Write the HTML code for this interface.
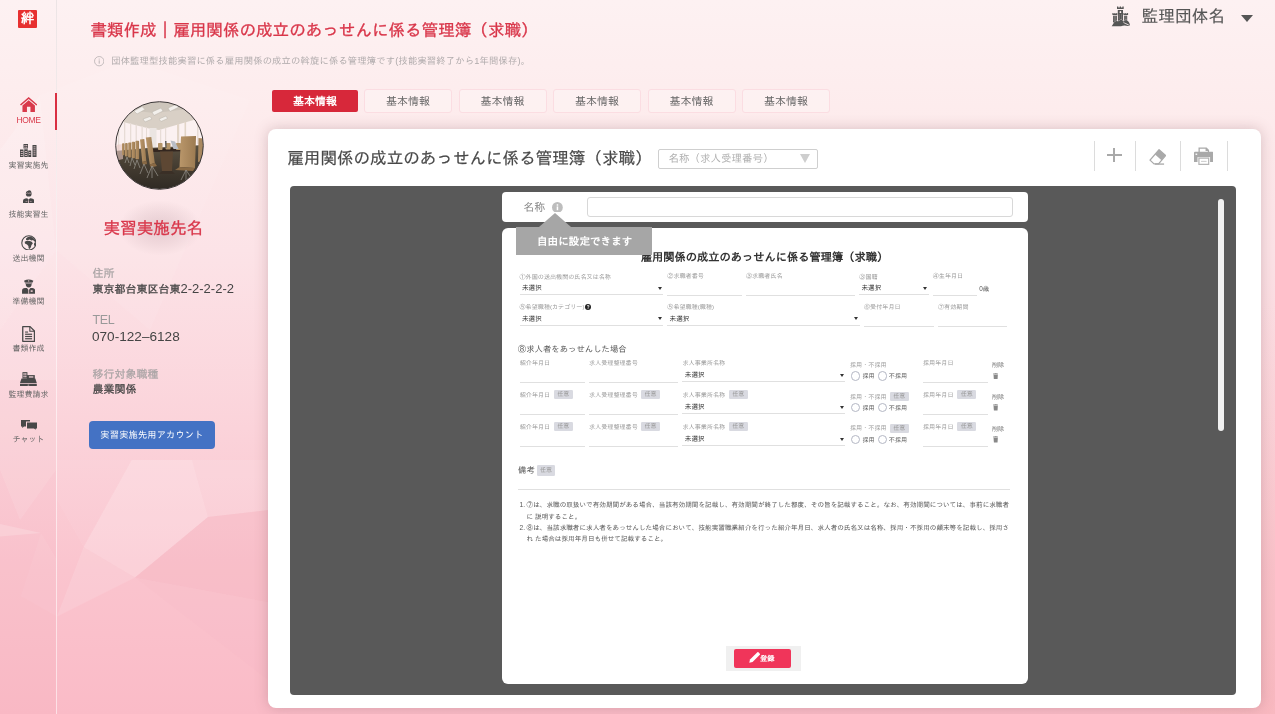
<!DOCTYPE html>
<html lang="ja"><head><meta charset="utf-8"><title>書類作成</title><style>
*{box-sizing:border-box;margin:0;padding:0}
html,body{width:1275px;height:714px;overflow:hidden}
body{position:relative;font-family:"Liberation Sans","IPAGothic",sans-serif;color:#444;background:#fbd9df}
#root{position:absolute;left:0;top:0;width:1275px;height:714px;overflow:hidden;will-change:transform}
.abs{position:absolute}
.t{position:absolute;white-space:nowrap;line-height:1}
#bg{position:absolute;left:0;top:0;width:1275px;height:714px}
.serif{font-family:"Liberation Sans","IPAGothic",sans-serif}
.side-l{position:absolute;left:0;width:57px;text-align:center;font-size:8px;color:#666;line-height:1;white-space:nowrap}
.tab{position:absolute;top:89px;height:24px;width:88px;border:1px solid #fbdde2;background:rgba(255,255,255,.25);border-radius:3px;font-size:11px;line-height:22px;text-align:center;color:#666}
.tab.on{top:90px;height:22px;left:272px;width:86px;background:#d7283a;border:0;color:#fff;font-weight:bold;border-radius:2px}
.lb{position:absolute;font-size:6.1px;line-height:1;color:#999;white-space:nowrap}
.vl{position:absolute;font-size:6.6px;line-height:1;color:#333;white-space:nowrap}
.ul{position:absolute;height:1px;background:#e0e0e0}
.ar{position:absolute;width:0;height:0;border-left:2.1px solid transparent;border-right:2.1px solid transparent;border-top:3.6px solid #333}
.bd{position:absolute;width:18.6px;height:8.7px;background:#d9dae1;border-radius:1.2px;font-size:6px;line-height:8.7px;text-align:center;color:#999}
.rd{position:absolute;width:9.3px;height:9.3px;border:0.7px solid #b4b7c4;border-radius:50%;background:#fff}
</style></head><body><div id="root">
<svg id="bg" viewBox="0 0 1275 714" preserveAspectRatio="none">
<defs>
<linearGradient id="g0" x1="0" y1="0" x2="0" y2="1">
<stop offset="0" stop-color="#fdf1f2"/><stop offset="0.15" stop-color="#fdeced"/><stop offset="0.35" stop-color="#fce3e7"/><stop offset="0.6" stop-color="#fbd3da"/><stop offset="0.8" stop-color="#fac4ce"/><stop offset="1" stop-color="#fabbc7"/>
</linearGradient>
<linearGradient id="g1" x1="0" y1="0" x2="0" y2="1"><stop offset="0" stop-color="#f5b0a8" stop-opacity="0"/><stop offset="1" stop-color="#f5b0a8" stop-opacity=".22"/></linearGradient>
</defs>
<rect width="1275" height="714" fill="url(#g0)"/>
<polygon points="0,150 40,95 56,250 0,330" fill="#fff" opacity=".16"/>
<polygon points="56,250 40,95 130,60 250,100 150,330" fill="#fff" opacity=".07"/>
<polygon points="0,330 56,250 56,470 20,520 0,470" fill="#fff" opacity=".10"/>
<polygon points="57,460 131.7,460 83.6,547 57,500" fill="#fff" opacity=".05"/>
<polygon points="131.7,460 192,460 208,517 135,577.4 83.6,547" fill="#fff" opacity=".22"/>
<polygon points="192,460 268,460 268,510 208,517" fill="#fff" opacity=".12"/>
<polygon points="208,517 268,510 268,602 135,577.4" fill="#f3a9b6" opacity=".22"/>
<polygon points="83.6,547 135,577.4 57,616.6" fill="#fff" opacity=".12"/>
<polygon points="135,577.4 268,602 268,680" fill="#f3a9b6" opacity=".06"/>
<polygon points="0,524 41,533 0,536.5" fill="#fff" opacity=".2"/>
<polygon points="41,533 21,596 57,616.6 57,560" fill="#fff" opacity=".06"/>
<rect x="0" y="380" width="56" height="334" fill="#f08aa0" opacity=".05"/>
<rect x="1180" y="300" width="95" height="414" fill="url(#g1)"/>
</svg>
<nav aria-label="メニュー">
<div class="abs" style="left:56px;top:0;width:1px;height:714px;background:rgba(255,255,255,.55)"></div>
<div class="abs" style="left:56px;top:0;width:1px;height:330px;background:linear-gradient(#ece4e5,rgba(236,228,229,0))"></div>
<div class="abs serif" style="left:18.2px;top:9.8px;width:18.8px;height:18.6px;background:#e73030;color:#fff;font-weight:900;font-size:13.5px;line-height:18px;text-align:center;border-radius:1px">絆</div>
<div class="abs" style="left:55px;top:93px;width:2px;height:37px;background:#d92f42"></div>
<svg class="abs" style="left:20px;top:97px" width="17.4" height="15" viewBox="0 0 24 20.7"><path fill="#d93a4b" d="M12 0 L24 10.3 L22.6 11.9 L12 2.9 L1.4 11.9 L0 10.3 Z"/><path fill="#d93a4b" d="M12 4.6 L20.6 11.9 V20.7 H14.4 V13.6 H9.6 V20.7 H3.4 V11.9 Z"/></svg>
<div class="side-l" style="top:115.9px;font-size:8.5px;color:#d93a4b;letter-spacing:-.4px;padding-left:0px">HOME</div>
<svg class="abs" style="left:20px;top:144px" width="17" height="13" viewBox="0 0 34 26" fill="#484848">
<rect x="7" y="0" width="9" height="9"/><rect x="0" y="11" width="7" height="15"/><rect x="8.5" y="10.5" width="7" height="15.5"/><rect x="16.5" y="13" width="6" height="13"/><rect x="25" y="2" width="8" height="24"/>
<g fill="#f6d5db"><rect x="9" y="2" width="2" height="2"/><rect x="12.5" y="2" width="2" height="2"/><rect x="9" y="5.5" width="2" height="2"/><rect x="12.5" y="5.5" width="2" height="2"/>
<rect x="1.5" y="14" width="4" height="1.5"/><rect x="1.5" y="18" width="4" height="1.5"/><rect x="1.5" y="22" width="4" height="1.5"/>
<rect x="10" y="14" width="4" height="1.5"/><rect x="10" y="18" width="4" height="1.5"/><rect x="10" y="22" width="4" height="1.5"/>
<rect x="18" y="16" width="3" height="1.5"/><rect x="18" y="20" width="3" height="1.5"/>
<rect x="27" y="5" width="4" height="1.5"/><rect x="27" y="9" width="4" height="1.5"/><rect x="27" y="13" width="4" height="1.5"/><rect x="27" y="17" width="4" height="1.5"/><rect x="27" y="21" width="4" height="1.5"/></g></svg>
<div class="side-l" style="top:161.9px">実習実施先</div>
<svg class="abs" style="left:23px;top:189.700px" width="11.200" height="13.400" viewBox="0 0 22 26.300" fill="#484848">
<circle cx="11.300" cy="7.300" r="5.700"/><path d="M7.500 3 L12 0.300 L16.300 2 L15 4.500 Z"/>
<path d="M0 26.300 V21 Q0 17.300 4.500 16.800 L8.200 16.300 L11 19.300 L13.800 16.300 L17.500 16.800 Q22 17.300 22 21 V26.300 Z"/>
<path d="M6.300 7.300 Q8.500 4.600 11.300 6.600 Q14 4.600 16.300 7.300" stroke="#f6d5db" stroke-width="1.100" fill="none"/><path d="M10.300 20 h1.500 v6.300 h-1.500z" fill="#f6d5db"/><path d="M5 22.500 h3.500 M13.500 22.500 h3.500" stroke="#f6d5db" stroke-width=".9"/></svg>
<div class="side-l" style="top:210.9px">技能実習生</div>
<svg class="abs" style="left:20.500px;top:234.600px" width="15.800" height="15.800" viewBox="0 0 32 32">
<circle cx="16" cy="16" r="14.400" fill="none" stroke="#484848" stroke-width="2.200"/>
<g fill="#484848"><path d="M10.500 6.500 Q14 3 19 3.200 Q25 4.500 28.500 10 L29.800 14 L26.500 12.800 L24.500 10.200 L21 11 L17.500 9.300 L13.500 10.500 L10 9.500 Z"/>
<path d="M7.500 13.500 L12 11.800 L18 12.200 L22.300 14 L24 17.200 L21.200 20.200 L20.200 24.200 L17.600 28.200 L15.400 27 L15 22.300 L12.200 19.300 L8 17.300 Z"/>
<path d="M26.800 15.500 L30 14.500 L30.200 20 L28 23.500 L26.300 19.500 Z"/></g></svg>
<div class="side-l" style="top:254.9px">送出機関</div>
<svg class="abs" style="left:22px;top:279px" width="13.4" height="14.8" viewBox="0 0 27 30" fill="#484848">
<path d="M4 3.5 Q13.5 -1.5 23 3.5 L21.5 7 H5.5 Z"/><rect x="6.5" y="7.5" width="14" height="1.8"/>
<path d="M7.5 10 H19.5 Q19.5 17 13.5 17 Q7.5 17 7.5 10Z"/>
<path d="M0 30 V24 Q0 19 6 18.5 L10 18 L13.5 23 L17 18 L21 18.5 Q27 19 27 24 V30 Z"/>
<path d="M12.7 22 h1.6 v8 h-1.6z" fill="#f6d5db"/><rect x="17.5" y="23" width="4" height="3" fill="#f6d5db"/><circle cx="13.5" cy="4" r="1.3" fill="#f6d5db"/></svg>
<div class="side-l" style="top:297.9px">準備機関</div>
<svg class="abs" style="left:22px;top:325.900px" width="13.200" height="16" viewBox="0 0 26 32">
<path d="M1.3 1.3 H16 L24.7 10 V30.7 H1.3 Z" fill="none" stroke="#484848" stroke-width="2.6" stroke-linejoin="round"/>
<path d="M15.5 1.5 V10.5 H24.5" fill="none" stroke="#484848" stroke-width="2.2"/>
<g fill="#484848"><rect x="6" y="11" width="6" height="2.2"/><rect x="6" y="15.3" width="14" height="2.4"/><rect x="6" y="19.8" width="14" height="2.4"/><rect x="6" y="24.3" width="14" height="2.4"/></g></svg>
<div class="side-l" style="top:345.1px">書類作成</div>
<svg class="abs" style="left:20.3px;top:371.5px" width="16.8" height="14.6" viewBox="0 0 34 29" fill="#484848">
<rect x="5" y="0" width="10" height="13"/><rect x="14" y="6" width="16" height="9"/>
<path d="M3 13 H31 L34 22 H0 Z"/><rect x="0" y="23.5" width="34" height="5.5"/>
<g fill="#f6d5db"><rect x="7" y="2" width="2.4" height="3.5"/><rect x="10.6" y="2" width="2.4" height="3.5"/><rect x="7" y="7" width="2.4" height="3.5"/><rect x="10.6" y="7" width="2.4" height="3.5"/><rect x="18" y="8.5" width="9" height="2.5"/><rect x="15.5" y="25.5" width="3" height="1.4"/></g></svg>
<div class="side-l" style="top:390.9px">監理費請求</div>
<svg class="abs" style="left:20.7px;top:419.8px" width="16" height="9.8" viewBox="0 0 32 19.6" fill="#484848">
<path d="M0 0 H18 V3 H10 V13 H6 L2.5 16 V13 H0 Z"/><path d="M12 5 H32 V17 H29.5 V19.6 L26 17 H12 Z"/></svg>
<div class="side-l" style="top:435.9px">チャット</div>
</nav>
<header>
<div class="t serif" style="left:90.4px;top:23.2px;font-size:16.57px;font-weight:400;-webkit-text-stroke:.3px #d9364a;color:#d9364a">書類作成｜雇用関係の成立のあっせんに係る管理簿（求職）</div>
<svg class="abs" style="left:93.5px;top:56.2px" width="10.4" height="10.4" viewBox="0 0 20 20"><circle cx="10" cy="10" r="9" fill="none" stroke="#b9b3b4" stroke-width="1.6"/><rect x="9.1" y="8.3" width="1.8" height="6.5" fill="#b9b3b4"/><rect x="9.1" y="5" width="1.8" height="1.9" fill="#b9b3b4"/></svg>
<div class="t" style="left:111.2px;top:57.4px;font-size:9.3px;color:#b0abac;letter-spacing:.17px">団体監理型技能実習に係る雇用関係の成立の斡旋に係る管理簿です(技能実習終了から1年間保存)。</div>
<svg class="abs" style="left:1111px;top:6px" width="20" height="21" viewBox="0 0 20 21" fill="#555">
<path d="M6 3 V0.5 H7.3 V1.5 H8.7 V0.5 H10 V1.5 H11.4 V0.5 H12.7 V3 Z"/>
<path d="M6.800 4 H12 V15 H6.800 Z"/>
<path d="M1.400 9 V6.900 H2.500 V7.700 H3.400 V6.900 H4.400 V7.700 H5.300 V6.900 H6.300 V9 Z"/>
<path d="M2 9.700 H6.100 V16.500 H2 Z"/>
<path d="M12.400 9 V6.900 H13.400 V7.700 H14.300 V6.900 H15.300 V7.700 H16.100 V6.900 H17.100 V9 Z"/>
<path d="M12.800 9.700 H16.200 V15 H12.800 Z"/>
<path d="M0.700 20.200 L3.200 16.300 Q5 14.600 7.200 15.200 L10.300 13.600 L12.600 15.600 L15 13.900 Q18.200 14.800 19 19.200 L16.800 19.900 Q13 18.800 10 20.200 Z" stroke="#fdeff0" stroke-width=".7" paint-order="stroke"/>
<g fill="#fdeff0"><path d="M8.600 7 V5.600 Q9.400 4.500 10.200 5.600 V7 Z"/><rect x="6.100" y="9.700" width=".7" height="5.500"/><rect x="12" y="9.700" width=".8" height="4.500"/>
<path d="M12.600 16.200 L17.800 18.600 L17.300 19.200 L12.200 16.800 Z"/></g>
<g stroke="#fdeff0" stroke-width=".35" opacity=".6"><path d="M3 10 V15 M4 10 V15 M5 10 V15 M13.800 10 V14 M15.100 10 V14 M8.200 8 V13.500 M10.600 8 V13.500"/></g>
</svg>
<div class="t" style="left:1141.6px;top:9.3px;font-size:16.7px;-webkit-text-stroke:.15px #555;color:#555">監理団体名</div>
<div class="abs" style="left:1240.9px;top:14.9px;width:0;height:0;border-left:6.3px solid transparent;border-right:6.3px solid transparent;border-top:7.9px solid #555"></div>
</header>
<aside>
<div class="abs" style="left:118px;top:200px;width:84px;height:56px;background:radial-gradient(ellipse at center,rgba(110,70,80,.17) 0%,rgba(110,70,80,.08) 40%,rgba(110,70,80,0) 70%)"></div>
<svg class="abs" style="left:114.5px;top:100.5px" width="89" height="89" viewBox="0 0 89 89">
<defs><clipPath id="cp"><circle cx="44.5" cy="44.5" r="43.6"/></clipPath>
<linearGradient id="fl" x1="0" y1="0" x2="0" y2="1"><stop offset="0" stop-color="#5b5242"/><stop offset=".5" stop-color="#433b30"/><stop offset="1" stop-color="#2e2923"/></linearGradient>
<linearGradient id="ch" x1="0" y1="0" x2="1" y2="0"><stop offset="0" stop-color="#b9966a"/><stop offset="1" stop-color="#9c7b52"/></linearGradient></defs>
<g clip-path="url(#cp)">
<rect width="89" height="89" fill="#fbf1f1"/>
<polygon points="0,0 89,0 89,16 44,29 36,28 0,19" fill="#d9d0c6"/>
<polygon points="0,0 89,0 89,6 40,12 0,8" fill="#cdc5bb"/>
<g fill="#f3f0ec" stroke="#b9b2a8" stroke-width=".5"><polygon points="19,10 27,5.5 30,8.5 22,13"/><polygon points="37,11 46,7 48,10 39,14.5"/><polygon points="53,7 62,3 64,6 55,10.5"/><polygon points="28,18 35,15.5 37,18 30,21"/><polygon points="44,18 51,15 52.5,17.5 46,20.5"/></g>
<rect x="34.5" y="27" width="7" height="24" fill="#ebe5e2"/>
<g fill="#e7dcd6"><rect x="3" y="20" width="1.2" height="30"/><rect x="9" y="21" width="1.3" height="28"/><rect x="15" y="22" width="1.3" height="27"/><rect x="20.6" y="23.5" width="1.3" height="25"/><rect x="26.5" y="25" width="1.3" height="24"/><rect x="31" y="26" width="1" height="22"/>
<rect x="45" y="28" width="1.2" height="20"/><rect x="50" y="26.5" width="1.2" height="21"/><rect x="62" y="23" width="2.2" height="23" fill="#e2d5c8"/><rect x="69.5" y="21" width="1.6" height="24" fill="#e2d5c8"/><rect x="82" y="17" width="1.5" height="26"/></g>
<polygon points="0,50 33,47 89,44 89,89 0,89" fill="url(#fl)"/>
<polygon points="0,44 8,43 8,58 0,60" fill="#e9c9c4" opacity=".6"/>
<polygon points="36,47.800 68,46.800 67,50.300 38,51" fill="#33261f"/>
<polygon points="45,50.5 58,50.5 57,70 47,70" fill="#5d4733"/>
<polygon points="47,70 57,70 60,73 44,73" fill="#3a2f26"/>
<g fill="#b39468"><rect x="43" y="42" width="4.5" height="7" rx=".8"/><rect x="50.5" y="42" width="5" height="6.5" rx=".8"/><rect x="61" y="42" width="5" height="7" rx=".8"/></g>
<g fill="url(#ch)"><rect x="7" y="42.300" width="2.500" height="12" rx=".8"/><rect x="10" y="42" width="2.700" height="13.500" rx=".8"/><rect x="13.200" y="41.500" width="3" height="15" rx=".8"/><rect x="16.700" y="40.800" width="3.300" height="16.500" rx=".8"/><rect x="20.500" y="39.800" width="3.600" height="18.500" rx=".8"/><polygon points="25,38.500 29.300,38 31.300,60 27.300,61"/><polygon points="30.800,36.500 36.300,36 39.800,62 34.800,63.500"/></g>
<g fill="#8a6a45"><polygon points="27,61 31.500,60 32,63 28,64"/><polygon points="34.5,63.500 40,62 42,65 36,66.5"/></g>
<polygon points="66,35.5 81,35 80,67 64.500,66" fill="url(#ch)"/><polygon points="83.5,37 88,37.5 88,60 83,61" fill="#a98860"/>
<polygon points="64.500,66 80,67 78,70 60,69" fill="#8a6a45"/>
<polygon points="55.5,39.5 60,40.5 63.500,48 58.5,48" fill="#b9bec6"/><polygon points="50,40 51.500,40 51.500,47 50.500,47" fill="#555"/>
<g stroke="#9a968f" stroke-width=".7" fill="none"><path d="M37 65 l-5 12 m5 -12 l6 10 m-6 -10 v12"/><path d="M29 63 l-4 10 m4 -10 l4 9"/><path d="M22 59 l-3 9 m3 -9 l3 8"/><path d="M17 57 l-2 8 m2 -8 l3 7"/><path d="M12 56 l-2 6 m2 -6 l2 6"/><path d="M71 69 l-5 10 m5 -10 l6 9 m-6 -9 v11"/></g>
</g>
<circle cx="44.500" cy="44.500" r="43.800" fill="none" stroke="#3a3636" stroke-width="1"/></svg>
<div class="t serif" style="left:103.5px;top:220.6px;font-size:16.6px;font-weight:400;-webkit-text-stroke:.3px #d9364a;color:#d9364a">実習実施先名</div>
<div class="t serif" style="left:92.5px;top:267.8px;font-size:11px;font-weight:400;-webkit-text-stroke:.25px #aaa4a5;color:#aaa4a5">住所</div>
<div class="t serif" style="left:92.5px;top:281.7px;font-size:11px;font-weight:400;color:#444"><span style="-webkit-text-stroke:.28px #444">東京都台東区台東</span><span style="font-size:13px;font-weight:400">2-2-2-2-2</span></div>
<div class="t" style="left:92.5px;top:314.3px;font-size:12.5px;letter-spacing:-.35px;color:#999">TEL</div>
<div class="t" style="left:92px;top:330.4px;font-size:13.6px;color:#444">070-122–6128</div>
<div class="t serif" style="left:92.5px;top:369px;font-size:11px;font-weight:400;-webkit-text-stroke:.25px #aaa4a5;color:#aaa4a5">移行対象職種</div>
<div class="t serif" style="left:92.5px;top:384.2px;font-size:11px;font-weight:400;-webkit-text-stroke:.28px #444;color:#444">農業関係</div>
<div class="abs" style="left:89px;top:421px;width:126px;height:28px;background:#4472c4;border-radius:4px;color:#fff;font-size:9.2px;line-height:29.6px;text-align:center;letter-spacing:.2px">実習実施先用アカウント</div>
</aside>
<main>
<div class="tab on">基本情報</div>
<div class="tab" style="left:364px">基本情報</div>
<div class="tab" style="left:458.5px">基本情報</div>
<div class="tab" style="left:553px">基本情報</div>
<div class="tab" style="left:647.5px">基本情報</div>
<div class="tab" style="left:742px">基本情報</div>
<div class="abs" style="left:268px;top:129px;width:993px;height:579px;background:#fff;border-radius:8px;box-shadow:0 0 14px rgba(130,85,92,.3)"></div>
<div class="t serif" style="left:287.3px;top:150.6px;font-size:16.57px;font-weight:400;-webkit-text-stroke:.2px #484848;color:#484848">雇用関係の成立のあっせんに係る管理簿（求職）</div>
<div class="abs" style="left:658px;top:149px;width:160px;height:20px;border:1px solid #cfcfcf;border-radius:2px;background:#fff"></div>
<div class="t" style="left:668.4px;top:152.9px;font-size:10.5px;color:#b0b0b0">名称（求人受理番号）</div>
<div class="abs" style="left:799.9px;top:154.2px;width:0;height:0;border-left:5.8px solid transparent;border-right:5.8px solid transparent;border-top:9px solid #cecece"></div>
<div class="abs" style="left:1094px;top:141px;width:1px;height:30px;background:#dcdcdc"></div>
<div class="abs" style="left:1135px;top:141px;width:1px;height:30px;background:#dcdcdc"></div>
<div class="abs" style="left:1180px;top:141px;width:1px;height:30px;background:#dcdcdc"></div>
<div class="abs" style="left:1227px;top:141px;width:1px;height:30px;background:#dcdcdc"></div>
<div class="abs" style="left:1107.2px;top:154px;width:14.4px;height:2px;background:#a9a9a9"></div><div class="abs" style="left:1113.4px;top:147.8px;width:2px;height:14.4px;background:#a9a9a9"></div>
<svg class="abs" style="left:1148.7px;top:149px" width="17.6" height="16.2" viewBox="0 0 35 32"><path d="M20 1.5 L33 13 L19 29.5 H10 L2 22 Z" fill="#fff" stroke="#a9a9a9" stroke-width="2.6" stroke-linejoin="round"/><path d="M20 1.5 L33 13 L25 22.5 L12 11 Z" fill="#a9a9a9"/><rect x="12" y="28.6" width="18" height="2.6" fill="#a9a9a9"/></svg>
<svg class="abs" style="left:1193.5px;top:147.2px" width="19.6" height="18.2" viewBox="0 0 39 36" fill="#a9a9a9"><path d="M9 1 H25 L30 6 V13 H9 Z"/><path d="M11.500 3.500 H23 V8 H27.500 V13 H11.500 Z" fill="#fff"/><path d="M2 9.500 H37 Q39 9.500 39 11.500 V30 H0 V11.500 Q0 9.500 2 9.500Z"/><rect x="7" y="20" width="25" height="16" fill="#fff"/><path d="M9.800 22 H29.200 V34.500 H9.800Z" fill="#fff" stroke="#b4b4b4" stroke-width="2.400"/><rect x="14" y="27.500" width="11" height="1.800" fill="#c4c4c4"/><rect x="3" y="13" width="3.400" height="2.600" fill="#fff"/></svg>
<div class="abs" style="left:290px;top:186px;width:946px;height:508.5px;background:#595959;border-radius:4px"></div>
<div class="abs" style="left:1218px;top:198.6px;width:5.8px;height:232.6px;background:#f1f1f1;border-radius:3px"></div>
<div class="abs" style="left:502px;top:192px;width:526px;height:30px;background:#fff;border-radius:4px"></div>
<div class="t" style="left:523.3px;top:201.5px;font-size:11px;color:#888">名称</div>
<svg class="abs" style="left:551.9px;top:201.6px" width="10.8" height="10.8" viewBox="0 0 20 20"><circle cx="10" cy="10" r="10" fill="#bdbdbd"/><rect x="8.7" y="8.2" width="2.8" height="7" fill="#fff"/><rect x="8.7" y="4.2" width="2.8" height="2.6" fill="#fff"/></svg>
<div class="abs" style="left:587px;top:197px;width:426px;height:20px;border:1px solid #d8d8d8;border-radius:3px;background:#fff"></div>
<div class="abs" style="left:502px;top:228px;width:526px;height:456px;background:#fff;border-radius:6px"></div>
<div class="t" style="left:640.7px;top:251.7px;font-size:11.25px;font-weight:700;color:#333">雇用関係の成立のあっせんに係る管理簿（求職）</div>
<div class="abs" style="left:516px;top:227px;width:135.7px;height:28.4px;background:#a6a6a6"></div>
<div class="abs" style="left:539px;top:212.7px;width:0;height:0;border-left:16.7px solid transparent;border-right:16.7px solid transparent;border-bottom:14.4px solid #a6a6a6"></div>
<div class="t" style="left:537px;top:235.6px;font-size:10.6px;font-weight:700;color:#fff">自由に設定できます</div>
<div class="lb" style="left:519.5px;top:273.7px">①外国の送出機関の氏名又は名称</div>
<div class="vl" style="left:522px;top:285.4px">未選択</div>
<div class="ar" style="left:657.7px;top:286.7px"></div>
<div class="ul" style="left:519.7px;top:293.9px;width:143.6px"></div>
<div class="lb" style="left:667.3px;top:273.1px">②求職者番号</div>
<div class="ul" style="left:667.3px;top:294.8px;width:75.0px"></div>
<div class="lb" style="left:746px;top:273.1px">③求職者氏名</div>
<div class="ul" style="left:746px;top:294.8px;width:109.0px"></div>
<div class="lb" style="left:859.3px;top:273.7px">③国籍</div>
<div class="vl" style="left:861.5px;top:285.4px">未選択</div>
<div class="ar" style="left:923.1px;top:286.7px"></div>
<div class="ul" style="left:859.3px;top:293.9px;width:69.4px"></div>
<div class="lb" style="left:932.7px;top:273.1px">④生年月日</div>
<div class="ul" style="left:932.7px;top:294.8px;width:44.6px"></div>
<div class="vl" style="left:979.3px;top:285.6px;font-size:6.4px;color:#555">0歳</div>
<div class="lb" style="left:519.5px;top:304.4px">⑤希望職種(カテゴリー)</div>
<div class="vl" style="left:522px;top:316.1px">未選択</div>
<div class="ar" style="left:657.7px;top:317.4px"></div>
<div class="ul" style="left:519.7px;top:324.8px;width:143.6px"></div>
<svg class="abs" style="left:584.6px;top:304.3px" width="6" height="6" viewBox="0 0 20 20"><circle cx="10" cy="10" r="10" fill="#222"/><text x="10" y="15.5" font-size="15" font-weight="bold" text-anchor="middle" fill="#fff" font-family="Liberation Sans,sans-serif">?</text></svg>
<div class="lb" style="left:667.3px;top:304.4px">⑤希望職種(職種)</div>
<div class="vl" style="left:669.6px;top:316.1px">未選択</div>
<div class="ar" style="left:854.4px;top:317.4px"></div>
<div class="ul" style="left:667.3px;top:324.8px;width:192.7px"></div>
<div class="lb" style="left:864px;top:303.9px">⑥受付年月日</div>
<div class="ul" style="left:864px;top:325.5px;width:69.7px"></div>
<div class="lb" style="left:938px;top:303.9px">⑦有効期間</div>
<div class="ul" style="left:938px;top:325.5px;width:69.3px"></div>
<div class="t" style="left:517.8px;top:345.2px;font-size:8.4px;color:#555">⑧求人者をあっせんした場合</div>
<div class="lb" style="left:519.7px;top:360.0px">紹介年月日</div>
<div class="ul" style="left:519.7px;top:381.5px;width:65.0px"></div>
<div class="lb" style="left:589px;top:360.0px">求人受理整理番号</div>
<div class="ul" style="left:589px;top:381.5px;width:89.3px"></div>
<div class="lb" style="left:682.5px;top:360.3px">求人事業所名称</div>
<div class="vl" style="left:684.8px;top:372.4px">未選択</div>
<div class="ar" style="left:839.8px;top:373.7px"></div>
<div class="ul" style="left:682.3px;top:380.9px;width:163.1px"></div>
<div class="lb" style="left:850px;top:361.6px">採用・不採用</div>
<div class="rd" style="left:851px;top:371.3px"></div>
<div class="vl" style="left:862.4px;top:372.8px;font-size:6.1px;color:#555">採用</div>
<div class="rd" style="left:878px;top:371.3px"></div>
<div class="vl" style="left:888.8px;top:372.8px;font-size:6.1px;color:#555">不採用</div>
<div class="lb" style="left:923px;top:359.9px">採用年月日</div>
<div class="ul" style="left:923px;top:381.5px;width:65.0px"></div>
<div class="lb" style="left:992px;top:362.4px;color:#777">削除</div>
<svg class="abs" style="left:993px;top:372.5px" width="5.4" height="6.6" viewBox="0 0 16 20" fill="#888"><rect x="5" y="0" width="6" height="2"/><rect x="0" y="1.6" width="16" height="2.6"/><path d="M1.5 5.5 H14.5 L13.5 20 H2.5 Z"/></svg>
<div class="lb" style="left:519.7px;top:391.9px">紹介年月日</div>
<div class="ul" style="left:519.7px;top:413.9px;width:65.0px"></div>
<div class="lb" style="left:589px;top:391.9px">求人受理整理番号</div>
<div class="ul" style="left:589px;top:413.9px;width:89.3px"></div>
<div class="lb" style="left:682.5px;top:392.2px">求人事業所名称</div>
<div class="vl" style="left:684.8px;top:404.3px">未選択</div>
<div class="ar" style="left:839.8px;top:405.6px"></div>
<div class="ul" style="left:682.3px;top:413.3px;width:163.1px"></div>
<div class="lb" style="left:850px;top:393.5px">採用・不採用</div>
<div class="rd" style="left:851px;top:403.2px"></div>
<div class="vl" style="left:862.4px;top:404.7px;font-size:6.1px;color:#555">採用</div>
<div class="rd" style="left:878px;top:403.2px"></div>
<div class="vl" style="left:888.8px;top:404.7px;font-size:6.1px;color:#555">不採用</div>
<div class="lb" style="left:923px;top:391.8px">採用年月日</div>
<div class="ul" style="left:923px;top:413.9px;width:65.0px"></div>
<div class="lb" style="left:992px;top:394.3px;color:#777">削除</div>
<svg class="abs" style="left:993px;top:404.4px" width="5.4" height="6.6" viewBox="0 0 16 20" fill="#888"><rect x="5" y="0" width="6" height="2"/><rect x="0" y="1.6" width="16" height="2.6"/><path d="M1.5 5.5 H14.5 L13.5 20 H2.5 Z"/></svg>
<div class="bd" style="left:554px;top:390.0px">任意</div>
<div class="bd" style="left:641.3px;top:390.0px">任意</div>
<div class="bd" style="left:729px;top:390.3px">任意</div>
<div class="bd" style="left:890px;top:392.0px">任意</div>
<div class="bd" style="left:957.4px;top:390.0px">任意</div>
<div class="lb" style="left:519.7px;top:423.8px">紹介年月日</div>
<div class="ul" style="left:519.7px;top:445.7px;width:65.0px"></div>
<div class="lb" style="left:589px;top:423.8px">求人受理整理番号</div>
<div class="ul" style="left:589px;top:445.7px;width:89.3px"></div>
<div class="lb" style="left:682.5px;top:424.1px">求人事業所名称</div>
<div class="vl" style="left:684.8px;top:436.2px">未選択</div>
<div class="ar" style="left:839.8px;top:437.5px"></div>
<div class="ul" style="left:682.3px;top:445.1px;width:163.1px"></div>
<div class="lb" style="left:850px;top:425.4px">採用・不採用</div>
<div class="rd" style="left:851px;top:435.1px"></div>
<div class="vl" style="left:862.4px;top:436.6px;font-size:6.1px;color:#555">採用</div>
<div class="rd" style="left:878px;top:435.1px"></div>
<div class="vl" style="left:888.8px;top:436.6px;font-size:6.1px;color:#555">不採用</div>
<div class="lb" style="left:923px;top:423.7px">採用年月日</div>
<div class="ul" style="left:923px;top:445.7px;width:65.0px"></div>
<div class="lb" style="left:992px;top:426.2px;color:#777">削除</div>
<svg class="abs" style="left:993px;top:436.3px" width="5.4" height="6.6" viewBox="0 0 16 20" fill="#888"><rect x="5" y="0" width="6" height="2"/><rect x="0" y="1.6" width="16" height="2.6"/><path d="M1.5 5.5 H14.5 L13.5 20 H2.5 Z"/></svg>
<div class="bd" style="left:554px;top:421.90000000000003px">任意</div>
<div class="bd" style="left:641.3px;top:421.90000000000003px">任意</div>
<div class="bd" style="left:729px;top:422.20000000000005px">任意</div>
<div class="bd" style="left:890px;top:423.90000000000003px">任意</div>
<div class="bd" style="left:957.4px;top:421.90000000000003px">任意</div>
<div class="t" style="left:518px;top:465.6px;font-size:8.4px;color:#555">備考</div>
<div class="bd" style="left:536.8px;top:464.8px;height:11.2px;line-height:11.2px;width:18.5px">任意</div>
<div class="ul" style="left:517.5px;top:488.7px;width:492.5px"></div>
<div class="abs" style="left:519.6px;top:499.4px;width:491px;font-size:6.62px;line-height:11.2px;color:#555"><div style="display:flex"><div style="width:7px;flex:none">1.</div><div style="width:483.6px">⑦は、求職の取扱いで有効期間がある場合、当該有効期間を記載し、有効期間が終了した都度、その旨を記載すること。なお、有効期間については、事前に求職者に 説明すること。</div></div><div style="display:flex"><div style="width:7px;flex:none">2.</div><div style="width:483.6px">⑧は、当該求職者に求人者をあっせんした場合において、技能実習職業紹介を行った紹介年月日、求人者の氏名又は名称、採用・不採用の顛末等を記載し、採用され た場合は採用年月日も併せて記載すること。</div></div></div>
<div class="abs" style="left:726px;top:646px;width:75px;height:24.8px;background:#f0f0f0"></div>
<div class="abs" style="left:733.8px;top:648.7px;width:56.8px;height:19px;background:#f0355a;border-radius:2px"></div>
<svg class="abs" style="left:748.7px;top:652.4px" width="11.2" height="10.8" viewBox="0 0 22 21" fill="#fff"><path d="M16.5 0.5 Q17.5 -0.3 18.5 0.5 L21.3 3.3 Q22.1 4.3 21.3 5.3 L7 19.5 L0.5 21 L2 14.5 Z"/></svg>
<div class="t" style="left:760px;top:654.7px;font-size:7.3px;font-weight:700;color:#fff">登録</div>
</main>
</div></body></html>
